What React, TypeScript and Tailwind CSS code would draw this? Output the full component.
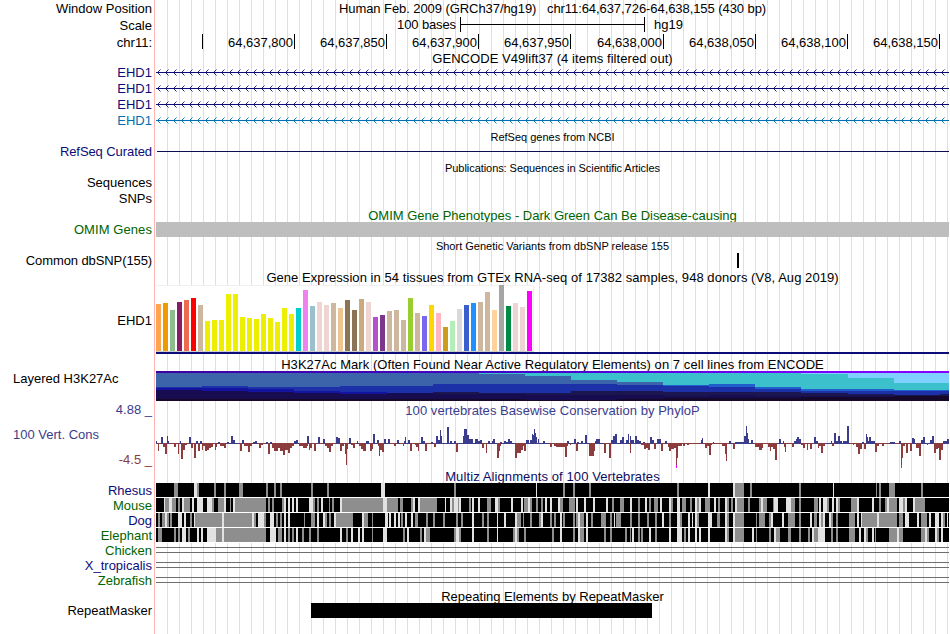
import type { ReactNode } from 'react';

const NAVY = 'text-[#0c0c78]';
const GREEN = 'text-[#006400]';
const INDIGO = 'text-[#3c3c8c]';

type RowProps = {
  h: string;
  label?: ReactNode;
  tone?: string;
  lift?: string;
  children?: ReactNode;
};

function Row({ h, label, tone = 'text-black', lift = '', children }: RowProps) {
  return (
    <div className={`flex w-full shrink-0 ${h}`}>
      <div className={`flex w-[155px] shrink-0 items-center justify-end whitespace-pre border-r border-[#ffb4b4] pr-[2px] ${tone} ${lift}`}>
        {label}
      </div>
      <div className="ml-px w-[793px] shrink-0 bg-[repeating-linear-gradient(to_right,transparent_0_11px,#dcdcfa_11px_12px)]">
        {children}
      </div>
    </div>
  );
}

function Title({ tone = 'text-black', size = 'text-[13px]', fit = '', children }: { tone?: string; size?: string; fit?: string; children: ReactNode }) {
  return <div className={`flex h-full items-center justify-center whitespace-pre ${size} ${tone} ${fit}`}>{children}</div>;
}

const ARROWS = Array.from({ length: 99 }, (_, i) => `M${4.5 + 8 * i} 4.5l-3 3l3 3`).join('');

function GeneLine({ color }: { color: string }) {
  return (
    <svg className="block" width="793" height="16">
      <rect y="7" width="793" height="1" fill={color} />
      <path d={ARROWS} fill="none" stroke={color} strokeWidth="0.9" />
    </svg>
  );
}

const TICKS: [number, string][] = [
  [46, ''],
  [138, '64,637,800'],
  [230, '64,637,850'],
  [322, '64,637,900'],
  [414, '64,637,950'],
  [507, '64,638,000'],
  [599, '64,638,050'],
  [691, '64,638,100'],
  [783, '64,638,150'],
];

function Ruler() {
  return (
    <div className="flex h-full">
      {TICKS.map(([x, text], i) => (
        <div
          key={x}
          className="flex h-[15px] shrink-0 items-center justify-end border-r border-black pr-px pt-[2px]"
          style={{ width: x + 1 - (i ? TICKS[i - 1][0] + 1 : 0) }}
        >
          {text}
        </div>
      ))}
    </div>
  );
}

const TISSUES: [number, string][] = [
  [47, '#ffa54f'], [48, '#ee9a00'], [41, '#8fbc8f'], [49, '#8b1c62'], [51, '#ee6a50'], [53, '#ff0000'],
  [46, '#cdb79e'], [30, '#eeee00'], [31, '#eeee00'], [31, '#eeee00'], [57, '#eeee00'], [57, '#eeee00'],
  [34, '#eeee00'], [33, '#eeee00'], [32, '#eeee00'], [37, '#eeee00'], [33, '#eeee00'], [29, '#eeee00'],
  [43, '#eeee00'], [37, '#eeee00'], [43, '#00cdcd'], [61, '#ee82ee'], [45, '#9ac0cd'], [49, '#eed5d2'],
  [46, '#eed5d2'], [48, '#cdb79e'], [43, '#eec591'], [51, '#8b7355'], [41, '#8b7355'], [52, '#cdaa7d'],
  [49, '#eed5d2'], [34, '#b452cd'], [36, '#7a378b'], [40, '#cdb79e'], [41, '#cdb79e'], [31, '#cdb79e'],
  [53, '#9acd32'], [38, '#cdb79e'], [35, '#7a67ee'], [46, '#ffd700'], [38, '#ffb6c1'], [24, '#cd9b1d'],
  [30, '#b4eeb4'], [42, '#d9d9d9'], [46, '#3a5fcd'], [48, '#1e90ff'], [49, '#cdb79e'], [59, '#cdb79e'],
  [41, '#ffd39b'], [66, '#a6a6a6'], [45, '#008b45'], [48, '#eed5d2'], [44, '#eed5d2'], [60, '#ff00ff'],
];

function Expression() {
  return (
    <div className="flex h-[69px] flex-col border-b-2 border-[#0c0c78]">
      <div className="flex h-[67px] w-[378px] items-end gap-[2px] border-b border-r border-t border-b-[#cccccc] border-r-[#f0f0f0] border-t-[#f0f0f0] bg-white">
        {TISSUES.map(([v, c], i) => (
          <div key={i} className="w-[5px] shrink-0" style={{ height: v, background: c }} />
        ))}
      </div>
    </div>
  );
}

// Each column: left edge, then the lower edge of every stacked layer.
const LAYERS = ['#80d0ff', '#3cc0cc', '#3c64aa', '#2060cc', '#1c30a8', '#1414a0', '#1c1650', '#180c50', '#160828'];
const MARKS: number[][] = [
  [0, 2, 2, 16, 16, 17, 19, 19, 28, 30],
  [46, 2, 2, 15, 15, 17, 20, 20, 28, 30],
  [92, 2, 2, 16, 16, 18, 21, 21, 28, 30],
  [138, 2, 2, 16, 16, 20, 22, 22, 28, 30],
  [184, 2, 2, 15, 15, 21, 23, 23, 28, 30],
  [231, 2, 2, 15, 15, 22, 22, 22, 28, 30],
  [277, 2, 2, 13, 13, 21, 21, 23, 28, 30],
  [323, 2, 3, 13, 13, 22, 22, 23, 28, 30],
  [369, 2, 5, 13, 13, 22, 22, 24, 29, 30],
  [415, 2, 9, 13, 13, 20, 20, 24, 29, 30],
  [461, 2, 11, 14, 14, 20, 20, 24, 28, 30],
  [507, 2, 14, 14, 15, 21, 21, 25, 27, 30],
  [553, 2, 13, 13, 16, 21, 21, 24, 27, 30],
  [599, 2, 16, 16, 18, 21, 21, 25, 27, 30],
  [645, 3, 18, 18, 20, 22, 22, 25, 26, 30],
  [692, 7, 18, 18, 20, 23, 23, 25, 26, 30],
  [738, 12, 19, 19, 20, 24, 24, 25, 25, 30],
  [784, 12, 19, 19, 20, 23, 23, 25, 25, 30],
  [793],
];

function Histone() {
  return (
    <svg className="block" width="793" height="30" shapeRendering="crispEdges">
      <defs>
        <linearGradient id="cap">
          <stop offset="0" stopColor="#3c00a0" />
          <stop offset="0.5" stopColor="#4400d0" />
          <stop offset="0.8" stopColor="#7800ff" />
          <stop offset="1" stopColor="#8800ff" />
        </linearGradient>
      </defs>
      {MARKS.slice(0, -1).map((m, i) =>
        LAYERS.map((c, j) => {
          const top = j ? m[j] : 2;
          return <rect key={`${i}-${j}`} x={m[0]} y={top} width={MARKS[i + 1][0] - m[0]} height={m[j + 1] - top} fill={c} />;
        }),
      )}
      <rect width="793" height="2" fill="url(#cap)" />
    </svg>
  );
}

// "x,width,height" triples; height counts pixels away from the zero line.
const UP =
  '0,1,2 5,2,6 11,1,7 12,1,2 24,1,2 33,2,6 40,2,2 44,2,2 62,2,1 71,2,1 75,2,7 77,2,3 86,2,3 97,2,1 99,2,2 110,2,1 114,2,1 138,2,2 140,2,3 151,2,7 162,2,6 167,2,4 180,2,6 182,2,5 193,2,5 201,1,2 210,3,2 217,2,9 221,2,3 228,2,4 232,2,4 241,2,3 248,1,2 249,1,6 252,2,3 ' +
  '265,2,6 267,2,2 275,2,1 280,2,7 282,2,3 284,1,13 285,1,7 291,2,16 294,2,2 298,2,2 307,1,7 308,3,14 311,2,8 313,4,4 319,3,4 322,2,2 324,2,3 332,2,2 336,1,2 337,2,4 344,2,1 348,2,2 350,2,1 352,2,4 354,2,2 370,3,3 374,2,3 376,1,9 377,1,8 378,1,14 379,1,10 380,1,6 382,1,4 387,2,2 411,2,2 418,2,4 421,2,1 425,2,2 429,2,8 439,2,2 440,4,4 455,2,3 457,2,7 459,2,9 464,2,3 466,2,6 470,2,3 472,1,9 474,1,7 475,3,3 479,2,7 481,2,3 483,2,2 487,2,1 494,2,6 496,2,3 501,4,4 509,2,2 ' +
  '545,1,3 546,1,5 557,1,1 573,2,2 579,9,1 588,2,7 590,1,17 591,1,10 592,1,4 595,2,3 623,2,4 627,1,2 638,2,2 640,1,4 641,2,6 643,2,4 658,2,6 660,2,2 675,1,2 678,2,10 680,2,2 682,2,7 684,2,2 687,4,2 691,2,17 706,2,1 710,1,9 711,1,6 712,1,2 713,2,6 715,4,2 734,5,1 743,2,2 756,2,5 758,1,4 765,2,3 767,2,6 774,2,3 776,2,7 787,4,2 791,2,4';
const DOWN =
  '2,1,8 7,2,4 9,2,11 18,2,4 22,1,11 25,2,16 27,2,7 29,2,2 35,2,5 38,2,15 42,2,8 46,1,7 47,2,3 49,2,8 51,2,7 53,2,5 55,2,4 59,1,7 60,1,4 64,4,3 68,2,5 84,2,8 88,4,3 92,2,9 94,2,3 103,2,5 105,2,2 112,2,11 116,2,5 118,4,8 122,2,5 124,3,8 127,2,12 129,3,7 132,2,10 134,2,5 136,2,3 143,4,3 147,4,5 151,1,3 153,1,7 154,2,5 158,2,8 169,2,3 171,2,5 173,2,9 175,2,3 184,2,8 186,2,3 189,1,11 190,1,22 191,1,6 195,2,2 197,2,5 203,2,3 205,2,6 207,3,8 214,2,8 216,1,6 222,1,3 223,1,13 224,2,7 226,2,9 238,2,3 247,1,3 254,2,8 259,3,2 ' +
  '260,2,4 262,1,8 269,2,8 278,2,4 300,2,9 326,2,5 330,1,10 341,2,15 343,1,8 344,1,3 359,2,15 361,4,10 365,2,7 367,1,3 368,2,8 394,2,4 398,2,3 400,5,4 405,4,4 409,2,14 411,1,3 414,1,2 420,2,8 433,5,13 438,1,8 448,2,10 449,1,6 453,2,15 474,1,10 485,3,2 488,2,6 490,2,5 492,2,7 498,2,6 505,2,8 512,1,4 513,2,8 515,3,6 518,2,5 520,1,22 521,1,15 522,3,3 ' +
  '524,2,3 527,2,3 531,2,2 549,2,5 551,2,3 553,2,12 555,1,2 566,3,3 569,1,11 570,1,18 577,2,6 599,4,4 603,3,7 606,1,5 612,2,4 614,1,8 615,2,4 617,2,6 619,2,17 628,1,4 629,1,9 636,2,4 645,2,2 647,2,5 651,1,7 654,2,6 662,1,5 663,2,3 665,2,10 667,2,3 676,2,3 697,1,2 700,2,4 702,2,11 704,2,6 708,2,6 719,2,9 721,2,3 726,2,3 745,1,22 746,1,15 747,2,3 750,2,10 754,2,8 760,3,5 763,2,13 771,1,2 778,2,10 780,2,6 782,1,5 783,2,17 785,2,7';
const BLUE_BASE =
  '61,3 71,16 97,4 110,6 138,5 201,2 210,3 217,6 228,6 241,3 248,4 264,5 280,19 302,24 332,9 345,14 370,24 411,8 422,11 438,10 455,19 475,10 494,11 573,4 579,19 621,7 638,8 658,4 670,24 709,10 733,6 756,4 765,13 787,6';

const parse = (s: string) => s.split(' ').map((t) => t.split(',').map(Number));

function Conservation() {
  return (
    <svg className="block" width="793" height="50" shapeRendering="crispEdges">
      <rect y="24" width="793" height="1" fill="#8c3c3c" />
      {parse(BLUE_BASE).map(([x, w]) => (
        <rect key={x} x={x} y="24" width={w} height="1" fill="#3c3c8c" />
      ))}
      {parse(UP).map(([x, w, v]) => (
        <rect key={`u${x}`} x={x} y={24 - v} width={w} height={v + 1} fill="#3c3c8c" />
      ))}
      {parse(DOWN).map(([x, w, v]) => (
        <rect key={`d${x}`} x={x} y="24" width={w} height={v} fill="#8c3c3c" />
      ))}
      <rect x="520" y="46" width="1" height="3" fill="#ff00ff" />
      <rect x="745" y="46" width="1" height="3" fill="#ff00ff" />
    </svg>
  );
}

// Alignment gaps over a black strip: g = mid gray, w = pale; position then width.
const SPECIES: { name: string; tone: string; gaps: string }[] = [
  {
    name: 'Rhesus',
    tone: NAVY,
    gaps: 'g18,4 w38,3 g41,2 g58,2 g68,2 g83,4 g110,2 g118,2 g124,2 g155,2 g171,2 w225,4 g298,2 w380,1 g407,2 g417,2 g433,2 g521,2 w552,2 w577,2 g579,9 g594,2 g643,2 w677,1 g720,1 g723,2 g733,6 g765,2',
  },
  {
    name: 'Mouse',
    tone: GREEN,
    gaps:
      'w8,1 g9,4 w13,3 g16,4 g22,2 w26,2 g28,6 w36,2 w41,6 w51,5 g56,2 g62,6 w68,2 g74,1 w77,2 g79,31 g112,2 g116,2 g126,2 w128,2 w132,2 w136,2 w140,2 w153,4 g157,2 g161,2 w165,2 g173,1 g176,2 w184,2 g186,41 w227,4 g231,11 g244,3 g255,2 w257,2 ' +
      'w262,2 g264,17 w289,1 w294,2 g296,2 w298,4 g302,1 w303,2 g313,2 w316,2 w322,2 g331,4 w339,3 g342,2 w355,2 w365,2 g368,4 w372,2 g374,2 g380,2 g385,2 w389,2 w394,2 w402,2 g404,3 g413,6 w420,2 w428,2 w437,2 w450,2 g456,2 g464,4 w474,2 g482,2 w489,2 g493,2 g498,4 w504,2 w513,2 g515,2 w521,3 ' +
      'g526,4 g534,2 w539,2 g541,2 w543,2 g549,5 w558,2 g562,2 w569,2 g571,2 g575,2 w579,2 g581,7 g592,2 g603,2 w605,2 g607,4 g617,1 w618,4 w630,5 g635,4 g643,2 g658,4 w663,2 w667,4 g671,2 w676,2 w680,2 g682,2 g695,6 w701,2 w716,2 g723,2 g729,2 w731,2 g733,8 w743,2 w745,2 g747,2 w749,2 w757,2 g759,10',
  },
  {
    name: 'Dog',
    tone: NAVY,
    gaps:
      'g2,2 g6,3 w9,2 g11,2 g14,2 w22,4 w28,2 g34,2 w38,1 g39,27 w66,2 g68,28 w96,2 g98,2 w102,6 g108,2 w114,4 g120,2 g124,2 w128,2 w132,2 g148,1 g155,4 w161,2 w167,2 g169,2 g173,2 w178,2 g180,17 w206,2 g208,4 g216,1 w229,3 w233,2 w238,2 w242,2 g245,2 w249,2 w255,2 g259,1 ' +
      'g260,2 g270,2 g277,2 g287,2 g300,2 g305,2 w316,2 g326,2 g331,2 w341,1 w348,2 w359,2 g361,4 g367,1 g374,2 g383,2 w385,2 g394,2 g398,2 w404,2 g407,2 g417,2 g420,2 w422,2 g424,4 w430,2 g435,2 g445,5 g454,2 w458,1 g460,5 g474,2 g482,2 g491,2 g499,2 w506,2 g513,2 w521,3 g524,2 ' +
      'w532,2 w536,1 w539,2 g541,2 w552,4 g561,3 w569,2 g571,2 w577,2 g579,9 g600,1 g603,6 g613,2 w615,2 w626,2 g632,7 g643,2 w654,2 g658,3 w663,2 g665,2 w667,2 w673,2 g675,2 g680,2 g693,6 w701,2 w705,1 g706,15 w721,2 g723,18 g743,4 w749,4 w761,2 g765,6 w773,2 w779,4 w785,2 g787,2 w791,1',
  },
  {
    name: 'Elephant',
    tone: GREEN,
    gaps:
      'g2,4 g18,2 g22,2 w26,4 g32,2 w41,2 w45,2 w51,9 g60,6 w66,2 g68,42 w114,6 g122,4 w128,2 g132,2 g136,2 w140,2 g146,2 g153,2 g161,2 w184,2 g190,2 w195,2 w202,2 w206,2 g216,1 w227,4 g247,2 w251,2 ' +
      'g264,2 w268,2 g270,4 g298,2 w300,3 g303,2 w316,2 g331,2 w341,1 g357,2 w359,2 g361,2 g368,2 g396,2 w404,2 g417,2 w422,2 g424,4 w430,2 g448,2 g454,2 g469,2 g474,1 w476,2 g482,2 g485,2 w493,2 g499,2 w513,2 w521,3 ' +
      'w524,2 g528,2 w532,2 w539,2 w543,2 w552,2 w569,2 g571,2 w577,2 g579,9 w596,2 g600,1 g613,2 w618,2 g620,4 g632,3 g643,2 g652,2 w656,2 g658,4 w662,7 g675,2 g680,2 g693,6 w703,2 w708,2 g710,2 w716,2 g719,1 g733,8 w741,2 g743,4 g765,4 w769,2 g771,2 w779,2 g781,2 w785,2',
  },
];

function Alignment({ gaps }: { gaps: string }) {
  return (
    <svg className="block" width="793" height="15" shapeRendering="crispEdges">
      <rect width="793" height="14" fill="#000" />
      <rect y="14" width="793" height="1" fill="#fff" />
      {gaps.split(' ').map((t, i) => {
        const [x, w] = t.slice(1).split(',').map(Number);
        return <rect key={i} x={x} width={w} height="14" fill={t[0] === 'g' ? '#8e8e8e' : '#e2e2e2'} />;
      })}
    </svg>
  );
}

function Unaligned() {
  return <div className="flex h-full flex-col pt-[4px]"><div className="h-[6px] border-y border-[#6e6e6e]" /></div>;
}

export default function App() {
  return (
    <div className="flex h-[634px] w-[950px] flex-col overflow-hidden bg-white font-['Liberation_Sans',Arial,sans-serif] text-[13px] leading-none text-black">
      <Row h="h-[17px]" label="Window Position">
        <Title fit="tracking-[-0.07px] pb-px">{'Human Feb. 2009 (GRCh37/hg19)   chr11:64,637,726-64,638,155 (430 bp)'}</Title>
      </Row>
      <Row h="h-[17px]" label="Scale">
        <div className="flex h-[15px] items-center">
          <span className="w-[300px] text-right tracking-[-0.12px]">100 bases</span>
          <div className="ml-[4px] flex h-full w-[185px] items-center border-x border-black">
            <div className="h-px w-full bg-black" />
          </div>
          <span className="ml-[9px]">hg19</span>
        </div>
      </Row>
      <Row h="h-[17px]" label="chr11:"><Ruler /></Row>
      <Row h="h-[14px]"><Title fit="tracking-[0.05px]">GENCODE V49lift37 (4 items filtered out)</Title></Row>
      <Row h="h-[16px]" lift="pb-[2px]" label="EHD1" tone={NAVY}><GeneLine color="#0c0c78" /></Row>
      <Row h="h-[16px]" lift="pb-[2px]" label="EHD1" tone={NAVY}><GeneLine color="#0c0c78" /></Row>
      <Row h="h-[16px]" lift="pb-[2px]" label="EHD1" tone={NAVY}><GeneLine color="#0c0c78" /></Row>
      <Row h="h-[16px]" lift="pb-[2px]" label="EHD1" tone="text-[#0070b0]"><GeneLine color="#0070b0" /></Row>
      <Row h="h-[16px]"><Title size="text-[11px]">RefSeq genes from NCBI</Title></Row>
      <Row h="h-[14px]" lift="pb-[2px] tracking-[-0.08px]" label="RefSeq Curated" tone={NAVY}>
        <div className="pl-px pt-[6px]"><div className="h-px bg-[#0c0c50]" /></div>
      </Row>
      <Row h="h-[17px]"><Title size="text-[11px]" fit="tracking-[-0.06px] pt-[2px]">Publications: Sequences in Scientific Articles</Title></Row>
      <Row h="h-[15px]" lift="pb-[2px]" label="Sequences" />
      <Row h="h-[16px]" lift="pb-[2px]" label="SNPs" />
      <Row h="h-[15px]"><Title tone={GREEN} fit="pt-[2px]">OMIM Gene Phenotypes - Dark Green Can Be Disease-causing</Title></Row>
      <Row h="h-[17px]" lift="pb-[2px] tracking-[0.08px]" label="OMIM Genes" tone={GREEN}><div className="h-[15px] bg-[#bebebe]" /></Row>
      <Row h="h-[14px]"><Title size="text-[11px]">Short Genetic Variants from dbSNP release 155</Title></Row>
      <Row h="h-[16px]" lift="pb-[2px] tracking-[-0.1px]" label="Common dbSNP(155)">
        <div className="ml-[581px] h-[15px] w-[2px] bg-black" />
      </Row>
      <Row h="h-[16px]"><Title fit="tracking-[0.055px]">Gene Expression in 54 tissues from GTEx RNA-seq of 17382 samples, 948 donors (V8, Aug 2019)</Title></Row>
      <Row h="h-[71px]" label="EHD1"><Expression /></Row>
      <Row h="h-[15px]"><Title fit="tracking-[0.06px] pt-[2px]">H3K27Ac Mark (Often Found Near Active Regulatory Elements) on 7 cell lines from ENCODE</Title></Row>
      <Row h="h-[30px]" label={<span className="flex h-full w-full pl-[13px] pt-px">Layered H3K27Ac</span>}><Histone /></Row>
      <Row h="h-[18px]" lift="pb-[2px]" label="4.88 _" tone={INDIGO}><Title tone={INDIGO} fit="tracking-[0.05px]">100 vertebrates Basewise Conservation by PhyloP</Title></Row>
      <Row
        h="h-[50px]"
        label={
          <span className="flex h-full w-full flex-col justify-between pb-[3px] pl-[13px] pt-[9px]">
            <span className="text-[#3c3c8c]">100 Vert. Cons</span>
            <span className="text-right text-[#8c3c3c]">-4.5 _</span>
          </span>
        }
      >
        <Conservation />
      </Row>
      <Row h="h-[14px]"><Title tone="text-[#0c0c64]" fit="tracking-[0.1px]">Multiz Alignments of 100 Vertebrates</Title></Row>
      {SPECIES.map((s) => (
        <Row key={s.name} h="h-[15px]" label={s.name} tone={s.tone}><Alignment gaps={s.gaps} /></Row>
      ))}
      <Row h="h-[15px]" label="Chicken" tone={GREEN}><Unaligned /></Row>
      <Row h="h-[15px]" label="X_tropicalis" tone={NAVY}><Unaligned /></Row>
      <Row h="h-[15px]" label="Zebrafish" tone={GREEN}><Unaligned /></Row>
      <Row h="h-[15px]"><Title fit="pt-[2px]">Repeating Elements by RepeatMasker</Title></Row>
      <Row h="h-[15px]" label="RepeatMasker"><div className="ml-[155px] h-[15px] w-[341px] bg-black" /></Row>
      <Row h="h-[16px]" />
    </div>
  );
}
